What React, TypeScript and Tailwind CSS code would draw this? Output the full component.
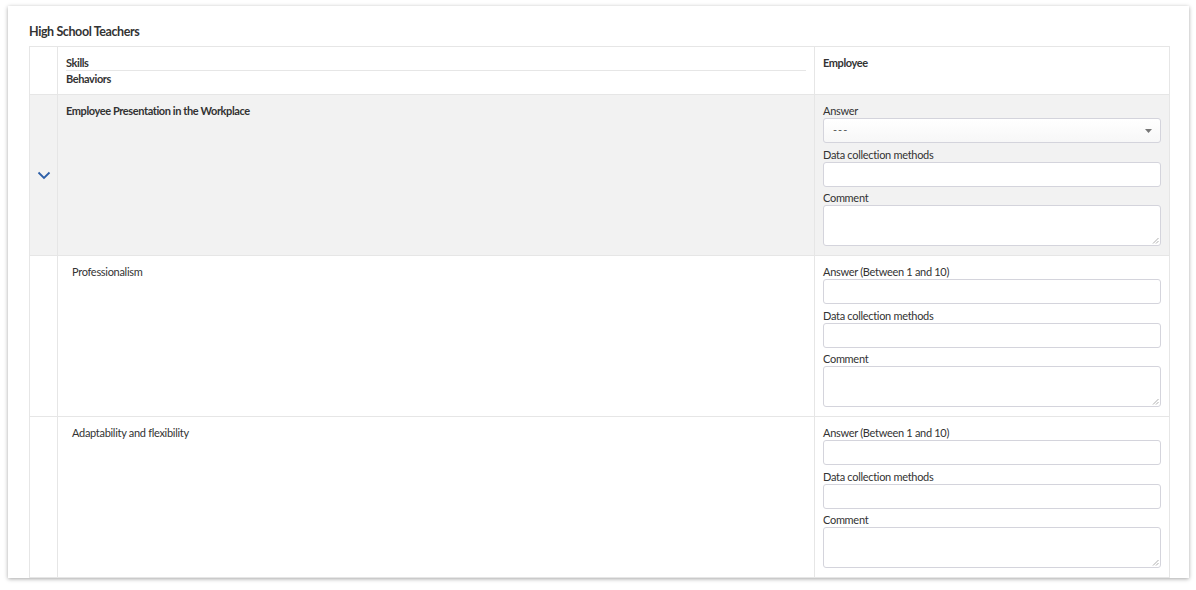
import React from "react";

const font = { fontFamily: "Lato, 'Noto Sans', sans-serif" };

function Field({ label, kind }: { label: string; kind: "select" | "input" | "textarea" }) {
  return (
    <div className="flex flex-col">
      <div className="h-[14px] text-[11px] leading-[14px] text-[#333] tracking-[-0.3px]">{label}</div>
      {kind === "select" && (
        <div className="h-[25px] rounded-[3px] border border-[#d4d4dc] bg-gradient-to-b from-white to-[#f7f7f7] flex items-center justify-between pl-[9px] pr-[8px]">
          <span className="text-[11px] text-[#555] tracking-[1px]">---</span>
          <svg width="7" height="4" viewBox="0 0 7 4"><path d="M0 0 L7 0 L3.5 4 Z" fill="#777" /></svg>
        </div>
      )}
      {kind === "input" && <div className="h-[25px] rounded-[3px] border border-[#d4d4dc] bg-white" />}
      {kind === "textarea" && (
        <div className="relative h-[41px] rounded-[3px] border border-[#d4d4dc] bg-white">
          <svg className="absolute right-[1px] bottom-[1px]" width="7" height="7" viewBox="0 0 7 7">
            <path d="M6.5 1 L1 6.5 M6.5 4 L4 6.5" stroke="#999" strokeWidth="0.8" />
          </svg>
        </div>
      )}
    </div>
  );
}

function Fields({ first }: { first: boolean }) {
  return (
    <div className="flex flex-col gap-[4.5px]">
      <Field label={first ? "Answer" : "Answer (Between 1 and 10)"} kind={first ? "select" : "input"} />
      <Field label="Data collection methods" kind="input" />
      <Field label="Comment" kind="textarea" />
    </div>
  );
}

export default function App() {
  const rows = ["Professionalism", "Adaptability and flexibility"];
  return (
    <div className="w-[1196px] h-[590px] bg-white pt-[6px] pl-[8px]" style={font}>
      <div className="w-[1181px] h-[572px] bg-white overflow-hidden shadow-[0_1px_4px_rgba(0,0,0,0.35)] pl-[21px] pr-[19px] pt-[18px]">
        <div className="text-[12.5px] font-bold text-[#333] leading-[15px] mb-[7px] tracking-[-0.4px]">High School Teachers</div>
        <div className="border border-[#e6e6e6] border-b-0">
          {/* header */}
          <div className="grid grid-cols-[28px_1fr_354px] h-[48px] border-b border-[#e6e6e6]">
            <div className="border-r border-[#e6e6e6]" />
            <div className="border-r border-[#e6e6e6] pl-[8px] pr-[8px] pt-[9px]">
              <div className="text-[11px] font-bold text-[#333] leading-[13px] pb-[1px] border-b border-[#e6e6e6] tracking-[-0.4px]">Skills</div>
              <div className="text-[11px] font-bold text-[#333] leading-[14px] pt-[1px] tracking-[-0.4px]">Behaviors</div>
            </div>
            <div className="pl-[8px] pt-[9px] text-[11px] font-bold text-[#333] leading-[14px] tracking-[-0.4px]">Employee</div>
          </div>
          {/* group row */}
          <div className="grid grid-cols-[28px_1fr_354px] h-[161px] bg-[#f2f2f2] border-b border-[#e6e6e6]">
            <div className="border-r border-[#e6e6e6] flex items-center justify-center">
              <svg width="14" height="9" viewBox="0 0 14 9" fill="none">
                <path d="M1.5 1.5 L7 7 L12.5 1.5" stroke="#2d5fa8" strokeWidth="1.8" />
              </svg>
            </div>
            <div className="border-r border-[#e6e6e6] pl-[8px] pt-[9px] text-[11px] font-bold text-[#333] leading-[14px] tracking-[-0.4px]">
              Employee Presentation in the Workplace
            </div>
            <div className="pl-[8px] pr-[8px] pt-[9px]">
              <Fields first />
            </div>
          </div>
          {rows.map((r) => (
            <div key={r} className="grid grid-cols-[28px_1fr_354px] h-[161px] bg-white border-b border-[#e6e6e6]">
              <div className="border-r border-[#e6e6e6]" />
              <div className="border-r border-[#e6e6e6] pl-[14px] pt-[9px] text-[11px] text-[#333] leading-[14px] tracking-[-0.3px]">{r}</div>
              <div className="pl-[8px] pr-[8px] pt-[9px]">
                <Fields first={false} />
              </div>
            </div>
          ))}
        </div>
      </div>
    </div>
  );
}
